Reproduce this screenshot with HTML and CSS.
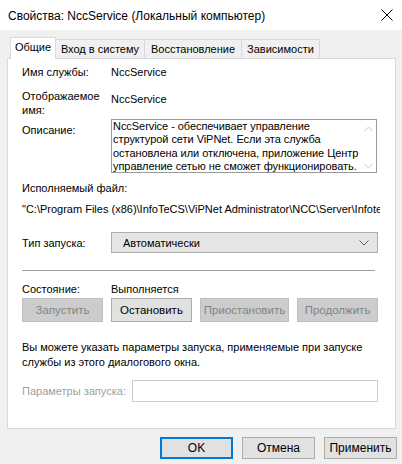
FILE: index.html
```html
<!DOCTYPE html>
<html lang="ru">
<head>
    <meta charset="UTF-8">
    <title>Свойства: NccService</title>
    <link rel="stylesheet" href="styles.css">
</head>
<body>

<div class="titlebar">
    <span class="title">Свойства: NccService (Локальный компьютер)</span>
    <svg class="close" width="12" height="12" viewBox="0 0 12 12">
        <path d="M0.5 0.5 L11.5 11.5 M11.5 0.5 L0.5 11.5" stroke="#000" stroke-width="1" fill="none"/>
    </svg>
</div>

<div class="dialog">
    <div class="tabs">
        <div class="tab active">Общие</div>
        <div class="tab t2">Вход в систему</div>
        <div class="tab t3">Восстановление</div>
        <div class="tab t4">Зависимости</div>
    </div>

    <div class="panel">
        <div class="row r-name">
            <span class="label">Имя службы:</span>
            <span>NccService</span>
        </div>
        <div class="row r-display">
            <span class="label">Отображаемое<br>имя:</span>
            <span class="value-top">NccService</span>
        </div>
        <div class="row r-desc">
            <span class="label label-desc">Описание:</span>
            <div class="descbox">
                <div class="desctext">NccService - обеспечивает управление структурой сети ViPNet. Если эта служба остановлена или отключена, приложение Центр управление сетью не сможет функционировать.</div>
                <div class="scroll">
                    <svg width="9" height="6" viewBox="0 0 9 6"><path d="M0.5 5 L4.5 1 L8.5 5" stroke="#c8c8c8" fill="none"/></svg>
                    <svg width="9" height="6" viewBox="0 0 9 6"><path d="M0.5 1 L4.5 5 L8.5 1" stroke="#c8c8c8" fill="none"/></svg>
                </div>
            </div>
        </div>
        <div class="row r-exe">Исполняемый файл:</div>
        <div class="row r-path">"C:\Program Files (x86)\InfoTeCS\ViPNet Administrator\NCC\Server\Infotecs.NccService.exe"</div>
        <div class="row r-start">
            <span class="label">Тип запуска:</span>
            <div class="select">
                <span>Автоматически</span>
                <svg width="10" height="6" viewBox="0 0 10 6"><path d="M0.5 0.5 L5 5 L9.5 0.5" stroke="#606060" fill="none"/></svg>
            </div>
        </div>
        <div class="separator"></div>
        <div class="row r-state">
            <span class="label">Состояние:</span>
            <span>Выполняется</span>
        </div>
        <div class="buttons">
            <div class="btn disabled b1">Запустить</div>
            <div class="btn b2">Остановить</div>
            <div class="btn disabled b3">Приостановить</div>
            <div class="btn disabled b4">Продолжить</div>
        </div>
        <div class="note">Вы можете указать параметры запуска, применяемые при запуске службы из этого диалогового окна.</div>
        <div class="row r-params">
            <span class="label-params">Параметры запуска:</span>
            <div class="input"></div>
        </div>
    </div>

    <div class="footer">
        <div class="btn fbtn default">OK</div>
        <div class="btn fbtn">Отмена</div>
        <div class="btn fbtn">Применить</div>
    </div>
</div>

</body>
</html>
```

FILE: styles.css
```css
body {
    margin: 0;
    padding: 0;
    width: 402px;
    height: 464px;
    overflow: hidden;
    background-color: #f0f0f0;
    font-family: "Liberation Sans", Arial, sans-serif;
    font-size: 11px;
    color: #000;
}
.titlebar {
    height: 30px;
    background-color: #fff;
    display: flex;
    align-items: center;
    justify-content: space-between;
    padding: 0 9px 0 8px;
    box-sizing: border-box;
}
.title {
    font-size: 12px;
    padding-top: 1px;
}
.close {
    display: block;
}
.tabs {
    display: flex;
    align-items: flex-start;
    height: 21px;
    padding: 7px 0 0 10px;
}
.tab {
    box-sizing: border-box;
    margin-top: 2px;
    height: 19px;
    border-top: 1px solid #d9d9d9;
    border-right: 1px solid #d9d9d9;
    text-align: center;
    line-height: 18px;
    background-color: #f0f0f0;
}
.tab.active {
    position: relative;
    z-index: 1;
    margin-top: 0;
    height: 22px;
    width: 46px;
    border-left: 1px solid #d9d9d9;
    background-color: #fff;
    line-height: 19px;
}
.t2 { width: 89px; }
.t3 { width: 97px; }
.t4 { width: 78px; }
.panel {
    box-sizing: border-box;
    margin-left: 7px;
    width: 389px;
    height: 371px;
    border: 1px solid #d9d9d9;
    background-color: #fff;
    padding: 6px 0 0 14px;
}
.row {
    display: flex;
    line-height: 14px;
    white-space: nowrap;
}
.label {
    width: 89px;
    flex-shrink: 0;
}
.r-display {
    margin-top: 10px;
}
.value-top {
    padding-top: 3px;
}
.r-desc {
    margin-top: 2px;
}
.label-desc {
    padding-top: 4px;
}
.descbox {
    box-sizing: border-box;
    width: 266px;
    height: 54px;
    border: 1px solid #9a9a9a;
    display: flex;
    overflow: hidden;
}
.desctext {
    flex: 1;
    white-space: normal;
    padding-left: 1px;
    line-height: 13.3px;
    letter-spacing: -0.05px;
}
.scroll {
    width: 15px;
    flex-shrink: 0;
    display: flex;
    flex-direction: column;
    justify-content: space-between;
    align-items: center;
    padding: 6px 0 3px;
}
.r-exe {
    margin-top: 8px;
}
.r-path {
    margin-top: 7px;
    width: 358px;
    overflow: hidden;
}
.r-start {
    margin-top: 16px;
    align-items: center;
}
.select {
    box-sizing: border-box;
    width: 267px;
    height: 21px;
    border: 1px solid #adadad;
    background-color: #e5e5e5;
    display: flex;
    align-items: center;
    justify-content: space-between;
    padding: 0 8px 0 11px;
}
.separator {
    margin-top: 17px;
    width: 353px;
    height: 1px;
    background-color: #a0a0a0;
}
.r-state {
    margin-top: 11px;
}
.buttons {
    display: flex;
    gap: 8px;
    margin-top: 2px;
}
.btn {
    box-sizing: border-box;
    height: 24px;
    border: 1px solid #adadad;
    background-color: #e1e1e1;
    display: flex;
    align-items: center;
    justify-content: center;
    font-size: 11.5px;
}
.btn.disabled {
    background-color: #cccccc;
    border-color: #bfbfbf;
    color: #838383;
}
.b1 { width: 81px; }
.b2 { width: 81px; }
.b3 { width: 89px; }
.b4 { width: 81px; }
.note {
    margin-top: 18px;
    line-height: 15px;
    width: 360px;
}
.r-params {
    margin-top: 10px;
    align-items: center;
}
.label-params {
    width: 110px;
    color: #a0a0a0;
}
.input {
    box-sizing: border-box;
    width: 246px;
    height: 22px;
    border: 1px solid #cccccc;
    background-color: #fff;
}
.footer {
    display: flex;
    justify-content: flex-end;
    gap: 9px;
    padding: 8px 5px 0 0;
}
.fbtn {
    width: 73px;
    height: 22px;
    font-size: 12px;
}
.btn.default {
    border: 2px solid #0078d7;
}
```
